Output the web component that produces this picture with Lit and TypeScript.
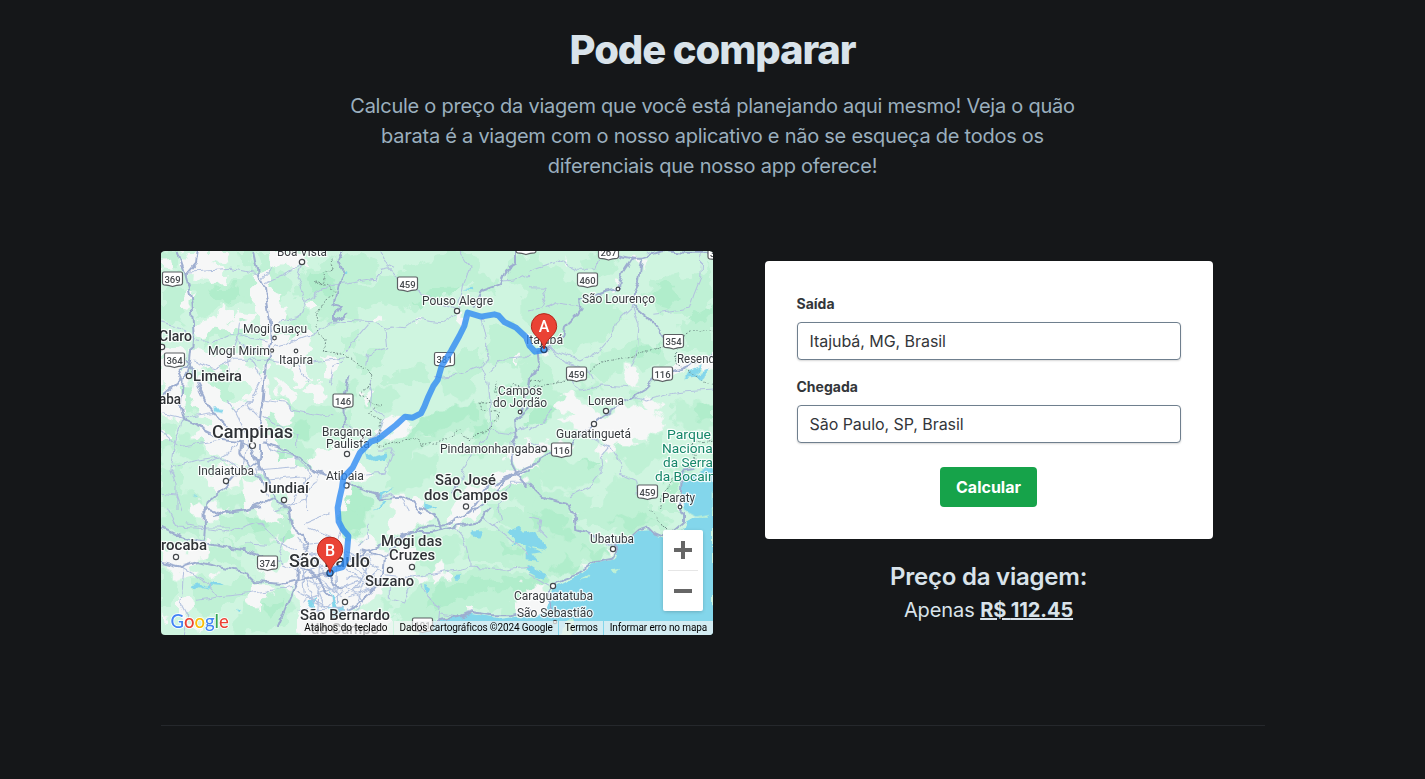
import { LitElement, css, html, svg } from "lit";
import { customElement, property, state } from "lit/decorators.js";

interface Tile {
  x: number;
  y: number;
  dark?: string;
  deep?: string;
  town?: string;
  water?: string;
  minor?: string;
  major?: string;
  border?: string;
}

// The terrain is kept on a grid of three by three tiles, three units to a pixel.
const TILES: Tile[] = [
  {
    x: 0, y: 0,
    dark: "M90 95L130 100 175 85 205 95 280 62 285 150 210 160 170 165 150 190 110 200 95 160ZM285 0L350 0 355 60 385 85 400 130 360 150 380 200 350 210 320 120 300 80ZM430 60L500 20 590 40 590 210 470 215 480 160 440 150 405 130ZM0 120L40 95 80 130 60 220 20 230 0 200ZM380 215L430 170 460 215 440 290 400 300ZM150 220L230 200 290 230 245 265 170 260 110 290 130 240ZM120 310L170 290 210 340 160 375 110 340ZM230 0L270 0 290 60 240 50ZM0 10L45 0 55 50 20 60Z",
    deep: "M440 80L490 50 520 80 500 130 450 130ZM150 110L230 105 250 140 180 155Z",
    town: "M70 0L190 0 195 30 150 45 195 55 190 95 150 100 130 80 75 75 60 30ZM275 75L330 55 325 110 365 125 350 155 375 170 360 205 345 240 320 250 300 205 280 190ZM60 145L90 130 100 180 50 160ZM180 165L225 180 205 215 245 190 290 195 260 215 230 225 215 250 180 230 140 235 120 270 95 250 120 205 165 195ZM375 0L430 20 440 45 410 60 380 45 355 20ZM320 240L380 255 370 290 430 240 450 270 425 330 380 350 330 330 310 290ZM95 290L150 305 190 300 240 310 260 345 210 370 150 350 115 365 90 330ZM0 300L40 290 75 310 80 400 0 400ZM430 150L460 150 450 185ZM480 320L510 310 530 370 490 385ZM0 25L30 20 35 60 0 55ZM240 350L290 345 300 390 220 390ZM330 0L375 0 360 40 335 50ZM390 350L440 340 460 390 400 400Z",
    minor: "M85 60L210 52 250 60 295 70M330 55L300 85M312 95L400 55 420 33 405 80 435 155 410 200 360 210 330 250M435 155L490 110 552 95M95 268L150 275 210 250 235 250 320 270M235 215L230 270 250 285 300 310M340 290L450 250 500 220 552 210M100 330L160 350 220 325 320 325M320 325L400 340 552 320M552 330L515 350 505 400M0 215L60 230 90 265M230 255L200 330 210 390M410 345L440 390",
    major: "M50 0L72 65 90 140 98 250 90 330 70 390M75 70L105 35 110 0M280 0L295 75 312 110 325 200 332 260 310 390M80 340L50 350 60 390M552 190L522 210 522 190 540 165 520 160 535 100 550 70 530 30 545 0",
    border: "M510 25L520 50 485 65 490 90 460 95 500 100 525 125 490 150 470 190 465 230 495 265 490 300 552 312",
  },
  {
    x: 552, y: 0,
    dark: "M-10 105L90 100 150 65 220 40 330 0 380 10 420 70 460 120 370 110 270 140 190 180 90 150 30 185 -10 165ZM0 30L80 0 110 60 70 90 10 80ZM500 30L590 10 590 120 520 90 480 100ZM430 230L500 220 570 270 520 350 420 330ZM40 310L110 290 120 340 50 370ZM150 360L250 340 260 400 120 400ZM340 300L400 290 420 350 360 390 310 350ZM0 250L40 245 30 290 0 300Z",
    deep: "M200 150L280 110 350 110 320 135 260 150 220 170Z",
    town: "M90 192L110 195 112 218 85 215ZM335 190L355 195 350 235 335 220ZM505 320L520 320 515 340ZM205 202L220 198 220 212ZM520 0L552 0 540 15Z",
    water: "M355 115L383 110 385 118ZM0 60L8 65 0 75Z",
    minor: "M105 0L130 45 150 55M0 100L90 85 110 55 130 50M130 50L175 100 225 120 290 160 330 175M0 208L90 212 120 230 140 225 180 230 215 205 290 215 330 190M120 230L125 290 70 310 65 350M75 215L20 280 0 300M345 0L375 45 355 100 340 180M425 215L410 200 425 270 425 320 410 345 428 387M552 70L520 85 475 90M410 345L330 375 270 380M440 360L470 325 540 320 552 310",
    major: "M500 40L480 70 468 100 410 120 385 170M510 0L510 35 485 50",
    border: "M0 310L40 345 78 365 70 412",
  },
  {
    x: 1104, y: 0,
    dark: "M-20 40L90 50 130 100 230 150 290 200 230 260 130 300 60 290 -20 210ZM360 110L430 70 480 85 540 30 552 150 500 190 420 200 350 150ZM160 20L240 0 265 60 220 80 160 60ZM220 300L350 270 400 290 420 330 350 350 290 340 220 390 160 390ZM450 215L552 200 552 300 470 290ZM-20 310L40 320 80 400 -20 400Z",
    deep: "M370 120L420 95 460 130 430 170 385 160ZM320 285L390 280 380 310 310 320ZM470 200L540 160 552 200 500 220Z",
    town: "M100 25L120 35 115 45ZM255 100L275 100 272 120 258 118ZM325 25L345 20 340 45ZM285 345L300 355 340 370 320 400 290 390ZM430 345L490 315 552 320 552 360 480 350 430 375ZM40 290L70 285 65 310 40 310Z",
    water: "M480 360L520 345 500 370 540 355 520 390 500 380 470 385Z",
    minor: "M0 60L90 28 140 55 200 55 215 10M0 110L45 112 50 140 40 170 0 180M50 170L80 155 150 165M375 10L350 0M520 0L515 80 495 130 480 175 370 190M310 165L330 220 325 290 300 350M310 170L260 215 245 260 210 300 150 330 60 290M60 290L110 330 170 350 190 390",
    major: "M260 10L310 20 340 20 400 0 470 5 552 5M310 20L280 65 270 110 225 120 150 150 155 170 140 195 105 230 100 255 60 295 25 302 30 340 0 400M340 20L330 90 315 120 315 165 350 195 375 220 400 255 430 285M370 387L400 370 450 355 552 310",
    border: "M-100 395L-80 430 -50 400 0 410 60 400 100 390 180 365 210 335 310 315 400 285 465 255 500 240 552 240M440 290L440 340 490 370 552 405",
  },
  {
    x: 0, y: 387,
    dark: "M45 0L105 20 135 75 95 105 60 70ZM145 0L210 0 220 50 200 75 160 40ZM310 30L400 80 430 100 480 70 530 90 520 140 410 190 350 195 300 160ZM0 120L50 140 40 210 0 230ZM60 160L120 180 130 230 90 250 40 220ZM350 170L420 190 470 230 450 280 370 250ZM270 250L330 290 310 320 280 290ZM0 250L70 260 60 330 0 350ZM0 340L100 330 130 390 0 390ZM170 350L250 330 300 360 280 390 170 390ZM380 300L430 290 440 320 390 330ZM500 110L570 80 570 180 500 200Z",
    deep: "M405 120L450 130 430 180 390 170ZM310 190L350 210 380 250 340 240Z",
    town: "M20 -20L60 -20 75 70 65 120 0 105 0 60ZM90 -10L170 20 195 80 250 60 270 20 280 -40 320 -30 330 40 370 75 400 120 370 130 320 100 310 160 350 190 350 240 410 230 430 265 460 225 490 200 570 180 590 250 570 330 560 400 400 400 370 330 330 320 310 270 250 265 200 240 140 215 100 165 150 130 110 90 85 50ZM340 -20L370 10 410 40 395 75 360 50ZM180 240L240 260 230 320 160 340 130 290ZM240 300L320 310 345 400 260 390ZM420 20L460 10 500 50 460 60ZM0 150L30 165 20 190 0 185Z",
    water: "M160 82L190 84 182 96 162 92ZM95 340L110 350 105 355Z",
    minor: "M0 100L70 115 160 100M65 120L40 200 30 270 45 310 45 390M0 155L50 200 120 190 180 180M195 60L225 100 265 180M225 100L290 40M305 60L380 70 390 90 440 100 520 110M305 110L340 130 410 165 410 200M300 150L330 210 400 230 450 280 400 350 380 390M30 265L110 240 180 230 250 280M240 180L200 220 140 250M260 180L245 270M270 210L330 330M300 200L290 270 320 350M290 270L400 260M480 280L430 360 340 390M320 300L430 290M270 -60L300 0 260 80 300 120M430 290L440 390M0 340L45 345 60 390",
    major: "M80 -60L105 0 135 65 170 110 205 150M65 0L60 80 70 120 155 160 180 180 230 185M0 55L60 0M310 0L305 60 292 150M230 185L265 200 310 280 350 360 390 400M310 190L350 200 420 240 460 275 500 290 552 300M240 180L235 215 265 265 300 235 300 195M132 400L140 370 185 330 225 285 265 265 345 345M150 405L260 390 345 350M565 -10L550 60 552 150",
  },
  {
    x: 552, y: 387,
    dark: "M240 120L330 90 420 60 430 130 380 150 270 180 200 230 130 260 110 200 180 160 240 170ZM280 -20L380 -20 400 40 330 60 290 50ZM60 30L130 20 170 50 120 90 60 80ZM120 240L280 220 270 290 160 340 120 320 150 270ZM420 130L500 150 480 200 390 240 350 230 400 160ZM450 20L590 10 590 60 470 90ZM-20 0L40 0 30 50 -20 60ZM450 300L520 250 590 290 590 400 470 340Z",
    deep: "M230 110L320 80 390 70 400 110 330 130 250 160 190 180ZM-10 310L30 310 90 370 60 410 0 420 -30 400ZM390 130L440 120 430 160 380 170Z",
    town: "M105 130L150 95 185 120 170 135 200 150 180 165 130 165 105 180 90 160ZM0 240L45 210 50 260 80 280 60 300 0 290ZM430 300L500 270 590 260 530 300 430 330ZM320 390L370 310 420 320 400 390 350 430ZM485 220L580 210 560 260 500 265ZM50 40L80 35 75 75 60 70ZM140 350L190 345 200 360 240 400 140 420Z",
    water: "M60 210L85 230 125 220 120 240 90 245 65 235ZM145 320L110 345 130 365 90 390 120 360 95 345ZM235 370L280 380 235 390Z",
    minor: "M70 0L80 40 75 80 120 110 105 150 70 180M100 210L145 210 120 280 60 285 0 310M428 0L435 60 440 130 420 180 385 220 360 260 340 310M440 150L500 160 552 140M170 355L190 390M110 350L130 340 150 350M460 380L500 310 552 310M0 130L30 150 60 180",
    major: "M0 305L40 325 90 340 105 355 170 350 200 365 230 400M370 400L430 320 500 285 552 260M385 400L480 300 552 270M552 80L510 120 515 170 500 190 500 250 520 290 552 325M345 310L320 340",
    border: "M70 25L40 45 110 75 80 90 70 100 110 120 100 160 100 200 170 180 220 175 230 200 310 175 345 145 370 180 435 145 460 100 410 90 405 70 450 60 460 0",
  },
  {
    x: 1104, y: 387,
    dark: "M-20 0L60 0 70 30 130 40 160 10 230 20 180 50 110 45 70 80 -20 110ZM430 70L500 60 552 90 552 150 470 150 420 100ZM-20 220L80 210 130 240 230 260 200 300 120 330 60 320 -20 280ZM230 180L310 200 400 170 410 230 320 280 270 230ZM250 290L310 300 380 390 220 390ZM20 350L140 330 200 350 180 400 30 400ZM300 20L350 60 370 50 330 80ZM400 340L450 330 455 400 390 400ZM430 260L500 260 450 300Z",
    deep: "M0 90L60 70 100 90 40 120 0 130ZM490 80L552 70 552 120 500 110ZM150 245L210 240 190 270ZM400 290L440 300 430 350Z",
    town: "M70 80L110 35 160 70 180 80 200 110 250 100 300 70 355 90 345 40 400 80 380 100 410 120 400 160 360 180 320 170 310 200 270 190 240 200 210 170 150 150 90 120 130 110ZM-20 180L60 190 130 190 100 220 40 225 -20 260ZM205 195L250 200 240 230 210 225ZM445 350L500 350 455 390ZM290 -40L320 -30 330 10 300 0Z",
    water: "M455 275L480 290 520 270 552 265 552 400 500 410 470 395 455 340Z",
    minor: "M130 0L150 30 220 15 300 20M310 45L355 60 430 40 470 35 552 30M150 150L200 180 240 200 270 240 275 280 320 300 325 340M240 200L215 230 220 270 180 320 120 350M70 80L40 130 0 150M0 185L50 210",
    major: "M0 0L-10 60 -30 100M370 0L340 30 290 60 200 125 130 190 60 225 0 262M0 310L45 355 120 375 130 400M450 380L455 345 460 275 490 270",
    border: "M0 10L40 0M395 390L400 340 430 300 500 250 490 190 552 180",
  },
  {
    x: 0, y: 768,
    dark: "M0 30L60 0 100 30 130 90 50 80 0 70ZM170 30L250 20 300 50 350 20 390 50 400 110 320 110 280 90 180 80ZM120 120L180 120 230 150 270 200 190 180 130 160ZM0 190L50 210 60 260 30 300 0 300ZM90 210L210 230 250 210 310 240 270 260 200 290 160 330 90 300ZM300 260L380 250 400 310 340 375 280 370 220 390 220 320ZM340 0L380 0 390 30ZM180 90L260 110 300 140 240 140Z",
    deep: "M255 35L320 30 330 70 270 80ZM370 60L400 60 400 100 370 100ZM300 300L370 280 340 340Z",
    town: "M80 -10L200 -10 180 30 130 40 90 20ZM280 -20L340 0 360 50 330 40 290 20ZM370 -20L530 -20 540 60 570 110 580 400 420 400 410 300 400 240 350 235 300 200 280 170 350 180 380 170 370 110 330 90 390 100 410 90 390 40ZM0 120L90 130 130 90 150 140 100 170 110 200 60 210 20 190ZM265 235L310 230 330 250 300 290 300 320 270 290ZM60 270L90 290 80 330 120 380 60 340ZM0 320L30 330 20 350ZM150 190L180 195 160 215Z",
    water: "M90 235L120 228 135 240 160 222 187 235 160 232 145 245 120 238 100 247ZM225 300L240 310 232 315ZM450 280L465 270 460 310 445 300ZM510 250L530 300 515 310ZM500 300L545 300 545 330 510 330Z",
    minor: "M20 0L50 60 140 65 200 75 290 45 350 100 410 130M80 50L130 60 210 60M60 180L130 220 170 270 260 260 400 240M70 170L60 290 80 330 70 390M105 280L170 270M250 110L320 115M410 90L460 160 500 190M430 50L500 20M420 180L460 290 545 310M545 50L520 130 420 150 430 260M440 60L530 100 420 110 500 210M400 160L545 270M405 250L500 300 545 250M320 150L410 190 405 230M370 90L350 160M410 310L545 300M440 220L520 250 600 220M450 190L490 300M480 150L470 320M420 200L560 160 600 130M520 120L530 290M430 280L560 230",
    major: "M0 62L60 90 120 105 160 115 250 130 300 150M130 0L132 60 128 105M0 165L60 180 110 165 150 175 250 195 280 225 360 230 410 220 470 205M380 0L390 55 430 90 440 130 410 160 410 220 400 240 350 360M130 0L180 20 250 10 300 0M470 205L505 200 520 235 545 245M420 180L470 210 480 240 510 270",
  },
  {
    x: 552, y: 768,
    dark: "M-20 0L80 0 70 60 20 100 -20 60ZM150 0L220 0 250 60 200 80 150 60ZM390 70L470 60 500 100 590 140 590 180 450 170 370 160 350 110ZM200 90L340 80 350 130 300 180 250 190 200 170ZM210 230L380 180 600 200 600 290 490 320 390 300 290 340 180 345 130 330 190 280ZM430 0L500 0 590 50 590 80 500 80ZM110 270L160 280 140 310 110 310Z",
    deep: "M260 260L340 220 450 210 600 220 600 250 430 250 340 280 250 310ZM460 110L520 120 540 150 470 140ZM-20 20L50 0 70 50 40 90 -20 70Z",
    town: "M150 -20L240 -20 260 40 220 60 180 90 130 70 140 30ZM-20 100L70 90 120 130 200 120 210 170 190 230 120 210 110 260 70 280 30 310 130 330 130 400 -20 400ZM320 20L360 20 350 60 310 60ZM260 190L300 170 310 210 290 235 260 230ZM180 190L250 210 210 230ZM370 290L380 290 385 315 375 315ZM500 290L590 260 610 330 500 320Z",
    water: "M380 70L410 70 400 92 380 85ZM490 75L520 60 540 80 575 70 600 130 520 110 500 115 510 95ZM320 207L350 205 345 218 325 218ZM240 230L262 245 245 260ZM230 350L300 335 370 320 410 325 470 335 552 325 552 420 200 420Z",
    minor: "M0 150L120 145M70 50L70 90 40 120M0 180L60 230 100 180M0 210L100 220 0 260M10 160L70 180 20 260M30 140L90 230M0 130L60 160 120 200M80 150L40 280M120 200L200 210 270 200 330 190 375 180M330 60L360 100 375 160 375 180 440 185 480 190 552 180M230 230L260 290 285 300 280 350M130 230L130 270 180 285 195 250 210 230M410 30L450 60 510 110 552 145M460 0L470 40 440 55M285 320L340 330 380 310M0 240L60 280 20 320M-20 120L50 200 40 250M10 270L100 240",
    major: "M0 165L110 115 190 80 240 60 300 55 365 20 400 0M120 145L190 75 260 75 330 60 400 45 440 0M225 0L270 25 290 70M120 150L115 200 80 255 30 295 0 310M50 130L120 150M280 340L340 330 380 315 440 325 500 325 552 310",
  },
  {
    x: 1104, y: 768,
    dark: "M-20 0L120 0 145 60 200 90 220 120 240 150 180 170 100 210 60 215 -20 170ZM160 0L380 0 430 60 400 80 350 60 300 90 250 70 200 70 150 40ZM470 0L552 0 552 40 490 40Z",
    deep: "M0 20L80 10 120 60 140 100 80 90 20 60ZM170 130L230 120 240 145 200 160ZM250 40L330 20 370 40 300 70ZM60 190L110 150 160 180 100 205Z",
    town: "M-20 240L50 235 65 290 50 330 -20 330ZM160 175L180 180 165 200ZM230 130L260 130 255 155Z",
    water: "M-10 115L40 135 10 140 30 165 -10 160ZM-10 170L55 210 40 215 -10 190Z",
    minor: "M0 30L35 40 30 70 55 95M0 200L60 235M215 85L235 120 290 100",
    major: "M120 0L140 30 145 70 180 80 210 100M70 238L60 250 62 290 80 330M70 235L110 212 150 198 200 162 250 152 265 130 260 110 300 95 330 68 355 60 370 75 400 88 430 75 465 45 465 20 450 0",
    border: "M360 10L375 25 385 45 415 65 420 85",
  },
];

const SEA =
  "M1104 1104L1150 1085 1168 1030 1180 1008 1225 985 1262 968 1308 932 1365 922 1371 900 1366 880 1400 870 1435 840 1470 838 1505 865 1560 850 1575 815 1600 800 1640 800 1656 775 1656 1160 1104 1160Z";
const COAST =
  "M1208 1115L1238 1100 1246 1130 1225 1160 1200 1160ZM1270 980L1285 970 1280 983 1252 988ZM1355 958L1378 953 1362 968Z";
const ROUTE =
  "M505 968L520 955 545 948 556 925 562 855 545 835 533 812 530 770 536 740 543 710 547 680 575 650 597 605 630 572 650 565 667 552 705 522 732 497 755 500 780 487 790 467 802 437 817 405 830 387 842 345 870 300 895 255 910 225 920 185 960 197 1000 190 1013 194 1030 213 1065 230 1095 258 1106 285 1122 302 1149 297";

type Label = [text: string, x: number, end: number, baseline: number, size: number, kind?: string];

const LABELS: Label[] = [
  ["Boa Vista", 116, 166, 5, 12],
  ["Claro", -2, 31, 89.5, 14, "city"],
  ["Mogi Guaçu", 82, 146, 82, 12],
  ["Mogi Mirim", 47, 109, 104, 12],
  ["Itapira", 118, 152, 113, 12],
  ["Limeira", 32, 81, 130, 14, "city"],
  ["aba", -2, 20, 153, 14, "city"],
  ["Campinas", 51, 132, 187, 17.5, "city"],
  ["Indaiatuba", 37, 93, 224, 12],
  ["Jundiaí", 99, 148, 242, 14, "city"],
  ["Bragança", 161, 211, 185, 12],
  ["Paulista", 165, 209, 197, 12],
  ["Atibaia", 165, 203, 229, 12],
  ["rocaba", 0, 46, 299, 14, "city"],
  ["São Paulo", 128, 209, 315.5, 18, "city"],
  ["São Bernardo", 139, 229, 368.5, 14.5, "city"],
  ["do Campo", 150, 218, 383, 14.5, "city"],
  ["Suzano", 204, 253, 335, 14, "city"],
  ["Mogi das", 220, 281, 294.5, 14, "city"],
  ["Cruzes", 228, 274, 309, 14, "city"],
  ["São José", 274, 335, 234, 14, "city"],
  ["dos Campos", 263, 347, 249, 14, "city"],
  ["Pouso Alegre", 261, 332, 54, 12],
  ["São Lourenço", 421, 494, 51.5, 12],
  ["Itajubá", 365, 402, 93, 12],
  ["Resende", 516, 560, 112, 12],
  ["Campos", 337, 381, 144, 12],
  ["do Jordão", 332, 386, 156, 12],
  ["Lorena", 427, 463, 154, 12],
  ["Guaratinguetá", 395, 470, 187, 12],
  ["Pindamonhangaba", 279, 380, 202, 12],
  ["Parque", 506, 550, 188, 13, "park"],
  ["Nacional", 501, 555, 202, 13, "park"],
  ["da Serra", 502, 552, 216, 13, "park"],
  ["da Bocaina", 494, 562, 230, 13, "park"],
  ["Paraty", 501, 534, 251, 12],
  ["Ubatuba", 429, 473, 292, 12],
  ["Caraguatatuba", 353, 432, 349, 12],
  ["São Sebastião", 356, 432, 366, 12],
];

const DOTS: [number, number, number][] = [
  [141, 11, 2.7], [113.5, 87, 1.8], [111, 99.5, 1.6], [135, 100, 1.8], [28, 125, 2.7], [1, 96, 2.7],
  [91.5, 194.5, 3], [65, 230, 2.6], [123, 249, 2.6], [186, 203, 2.6], [185.5, 234.5, 2.6], [15, 306, 2.6],
  [229, 319, 2.6], [251, 316, 2.6], [305, 255.5, 2.6], [296, 60, 2.6], [457, 38, 1.8], [359, 161, 1.8],
  [445, 160, 2.6], [433, 173, 2.6], [383, 198, 2.6], [519, 256, 1.8], [452, 298, 2.6], [392, 335, 2.6],
  [184, 351, 2.6], [394, 371, 1.6],
];

const SHIELDS: [string, number, number][] = [
  ["369", 11.5, 28], ["459", 246.5, 33], ["460", 426.5, 29], ["267", 447.5, 1.5], ["364", 13.5, 109],
  ["381", 283.5, 108.5], ["354", 512.5, 90.5], ["459", 415.5, 123], ["116", 501.5, 123], ["146", 182, 150],
  ["116", 400.5, 199], ["459", 486.5, 241], ["374", 106.5, 312], ["101", 261.5, 374], ["354", 557, 2], ["381", 365, -4],
];

@customElement("route-map")
export class RouteMap extends LitElement {
  static styles = css`
    :host {
      display: block;
      position: relative;
      width: 552px;
      height: 384px;
      overflow: hidden;
      border-radius: 4px;
      font-family: Roboto, "Liberation Sans", sans-serif;
    }
    .terrain { display: block; width: 552px; height: 384px; }
    .pale { fill: #cff5e0; }
    .dark { fill: #bff1d5; }
    .deep { fill: #b0edcb; }
    .town { fill: #f6f7f7; }
    .water { fill: #83d6eb; }
    .minor { fill: none; stroke: #b3c2df; stroke-width: 3.2; stroke-linejoin: round; }
    .major { fill: none; stroke: #9eaed0; stroke-width: 6; stroke-linejoin: round; }
    .border { fill: none; stroke: #6f8b86; stroke-width: 3; stroke-dasharray: 5 5; }
    .route { fill: none; stroke: #2f8bf2; stroke-width: 18; stroke-linejoin: round; stroke-linecap: round; opacity: 0.8; }
    .label { fill: #383c40; stroke: #fff; stroke-width: 2.4; stroke-opacity: 0.85; stroke-linejoin: round; paint-order: stroke; }
    .city { fill: #303337; font-weight: 500; }
    .park { fill: #16876a; }
    .dot { fill: #fff; stroke: #43474b; stroke-width: 1.2; }
    .shield { fill: #fff; stroke: #5b5f63; stroke-width: 1.2; }
    .shield-number { fill: #45494d; font-size: 9.5px; font-weight: 500; text-anchor: middle; }
    .pin { fill: #ea4335; stroke: #b3261b; stroke-width: 1; }
    .pin-letter { fill: #fff; font-size: 16px; font-weight: 500; text-anchor: middle; }
    .stop { fill: #4b9df5; stroke: #26466e; stroke-width: 1.3; }
    .logo { font-family: Lato, Roboto, sans-serif; font-size: 18.5px; font-weight: 500; stroke: #fff; stroke-width: 1.6; paint-order: stroke; }
    .blue { fill: #4285f4; }
    .red { fill: #ea4335; }
    .yellow { fill: #fbbc04; }
    .green { fill: #34a853; }
    .zoom {
      position: absolute;
      right: 10px;
      bottom: 24px;
      width: 40px;
      height: 81px;
      background: #fff;
      border-radius: 2px;
      box-shadow: 0 1px 4px -1px rgba(0, 0, 0, 0.3);
      display: flex;
      flex-direction: column;
      align-items: center;
    }
    .zoom-button { flex: 1; width: 40px; padding: 0; border: 0; background: none; display: grid; place-items: center; }
    .zoom-icon { display: block; fill: #666; }
    .zoom-rule { width: 30px; height: 1px; background: #e6e6e6; }
    .legal {
      position: absolute;
      right: 0;
      bottom: 0;
      height: 14px;
      display: flex;
      font-size: 10px;
      line-height: 14px;
      letter-spacing: -0.13px;
      color: #000;
      white-space: nowrap;
    }
    .legal-item { padding: 0 5.5px 0 5.5px; background: rgba(245, 245, 245, 0.7); }
    .legal-item:first-child { padding-left: 3px; letter-spacing: 0; }
    .legal-item + .legal-item { margin-left: 1px; }
  `;

  private layer(kind: "dark" | "deep" | "town" | "water" | "minor" | "major" | "border") {
    return TILES.map((t) =>
      t[kind] ? svg`<path class=${kind} transform="translate(${t.x} ${t.y})" d=${t[kind]}></path>` : null
    );
  }

  private pin(letter: string, x: number, y: number) {
    return svg`<g transform="translate(${x} ${y})">
      <circle class="stop" r="3"></circle>
      <path class="pin" d="M0-.5C-1.2-6.500-4-9.500-7.500-13.200C-10.600-16.200-12.700-19.200-12.700-23.200A12.700 12.700 0 0 1 12.700-23.200C12.700-19.200 10.600-16.200 7.500-13.200C4-9.500 1.200-6.500 0-.5Z"></path>
      <text class="pin-letter" y="-17.500">${letter}</text>
    </g>`;
  }

  render() {
    return html`
      <svg class="terrain" viewBox="0 0 552 384" role="img" aria-label="Mapa da rota">
        <defs>
          <filter id="rough" x="-30" y="-30" width="1716" height="1212" filterUnits="userSpaceOnUse" color-interpolation-filters="sRGB">
            <feTurbulence type="fractalNoise" baseFrequency="0.028" numOctaves="2" seed="4" result="n"></feTurbulence>
            <feDisplacementMap in="SourceGraphic" in2="n" scale="62" xChannelSelector="R" yChannelSelector="G"></feDisplacementMap>
          </filter>
          <filter id="bend" x="-30" y="-30" width="1716" height="1212" filterUnits="userSpaceOnUse" color-interpolation-filters="sRGB">
            <feTurbulence type="fractalNoise" baseFrequency="0.03" numOctaves="2" seed="9" result="n"></feTurbulence>
            <feDisplacementMap in="SourceGraphic" in2="n" scale="24" xChannelSelector="R" yChannelSelector="G"></feDisplacementMap>
          </filter>
        </defs>
        <rect class="pale" width="552" height="384"></rect>
        <g transform="scale(.33333)">
          <g filter="url(#rough)">
            ${this.layer("dark")}${this.layer("deep")}${this.layer("town")}
          </g>
          <g filter="url(#bend)">
            ${this.layer("water")}
            <path class="water" d=${SEA}></path>
            <path class="water" d="M1630 1060H1700V1200H1060V1130H1630Z"></path>
            <path class="dark" d=${COAST}></path>
            ${this.layer("minor")}${this.layer("border")}${this.layer("major")}
          </g>
        </g>
        ${SHIELDS.map(
          ([n, x, y]) => svg`<g transform="translate(${x} ${y})">
            <path class="shield" d="M-10-5.500Q-10-7-8.500-7H8.500Q10-7 10-5.500V4Q10 5.500 8.500 5.800Q4 6 0 7.500Q-4 6-8.500 5.800Q-10 5.500-10 4Z"></path>
            <text class="shield-number" y="3.500">${n}</text>
          </g>`
        )}
        ${DOTS.map(([x, y, r]) => svg`<circle class="dot" cx=${x} cy=${y} r=${r}></circle>`)}
        ${LABELS.map(
          ([t, x, end, y, size, kind = ""]) =>
            svg`<text class="label ${kind}" x=${x} y=${y} font-size=${size} textLength=${end - x} lengthAdjust="spacingAndGlyphs">${t}</text>`
        )}
        <g transform="scale(.33333)"><path class="route" d=${ROUTE}></path></g>
        ${this.pin("A", 383, 98.5)}${this.pin("B", 169, 322)}
        <text class="logo" x="9.500" y="376.500"><tspan class="blue">G</tspan><tspan class="red">o</tspan><tspan class="yellow">o</tspan><tspan class="blue">g</tspan><tspan class="green">l</tspan><tspan class="red">e</tspan></text>
      </svg>
      <div class="zoom">
        <button class="zoom-button" aria-label="Aumentar o zoom">
          <svg class="zoom-icon" width="18" height="18" viewBox="0 0 18 18"><path d="M7 0h4v7h7v4h-7v7H7v-7H0V7h7z"></path></svg>
        </button>
        <div class="zoom-rule"></div>
        <button class="zoom-button" aria-label="Diminuir o zoom">
          <svg class="zoom-icon" width="18" height="18" viewBox="0 0 18 18"><path d="M0 7h18v4H0z"></path></svg>
        </button>
      </div>
      <div class="legal">
        <span class="legal-item">Atalhos do teclado</span>
        <span class="legal-item">Dados cartográficos ©2024 Google</span>
        <span class="legal-item">Termos</span>
        <span class="legal-item">Informar erro no mapa</span>
      </div>
    `;
  }
}

@customElement("place-field")
export class PlaceField extends LitElement {
  @property() label = "";
  @property() value = "";

  static styles = css`
    :host { display: block; }
    .label { display: block; margin-bottom: 8px; font-size: 14px; line-height: 21px; font-weight: 700; color: #33363a; }
    .input {
      display: block;
      box-sizing: border-box;
      width: 100%;
      height: 38px;
      padding: 0 12px;
      border: 1px solid #6f7f8e;
      border-radius: 4px;
      background: #fff;
      box-shadow: 0 1px 2px rgba(0, 0, 0, 0.16);
      color: #33363a;
      font: 400 16px/24px Inter, sans-serif;
      letter-spacing: -0.05px;
      outline: none;
    }
  `;

  render() {
    return html`<label class="label" for="place">${this.label}</label>
      <input class="input" id="place" type="text" .value=${this.value} />`;
  }
}

@customElement("app-root")
export class AppRoot extends LitElement {
  @state() private price = "112.45";

  static styles = css`
    :host {
      display: block;
      box-sizing: border-box;
      height: 779px;
      overflow: hidden;
      background: #151719;
      color: #d9e3ea;
      font-family: Inter, "Liberation Sans", sans-serif;
    }
    .container { width: 1104px; margin: 0 auto; height: 725px; border-bottom: 1px solid #25282c; }
    .intro { width: 768px; margin: 0 auto; padding-top: 25px; text-align: center; }
    .title { margin: 0 0 16px; font-size: 40px; line-height: 50px; font-weight: 800; letter-spacing: -1.1px; }
    .lead { margin: 0; padding: 0 10px; font-size: 20px; line-height: 30px; letter-spacing: -0.25px; color: #9bafbe; }
    .compare { display: grid; grid-template-columns: 552px 552px; align-items: center; margin-top: 70px; }
    .quote { display: flex; flex-direction: column; align-items: center; }
    .card {
      box-sizing: border-box;
      width: 448px;
      padding: 32px;
      border-radius: 4px;
      background: #fff;
      display: flex;
      flex-direction: column;
      gap: 16px;
    }
    .submit {
      align-self: center;
      margin-top: 8px;
      height: 40px;
      padding: 0 16px;
      border: 0;
      border-radius: 4px;
      background: #16a34a;
      color: #fff;
      font: 700 16px/24px Inter, sans-serif;
    }
    .result-title { margin: 22px 0 0; font-size: 24px; line-height: 32px; font-weight: 600; letter-spacing: -0.22px; }
    .result { margin: 1px 0 -1px; font-size: 20px; line-height: 32px; letter-spacing: -0.1px; }
    .price { font-weight: 700; text-decoration: underline; }
  `;

  render() {
    return html`
      <section class="container">
        <header class="intro">
          <h2 class="title">Pode comparar</h2>
          <p class="lead">
            Calcule o preço da viagem que você está planejando aqui mesmo! Veja o quão barata é a viagem com o
            nosso aplicativo e não se esqueça de todos os diferenciais que nosso app oferece!
          </p>
        </header>
        <div class="compare">
          <route-map></route-map>
          <div class="quote">
            <form class="card" @submit=${(e: Event) => e.preventDefault()}>
              <place-field label="Saída" value="Itajubá, MG, Brasil"></place-field>
              <place-field label="Chegada" value="São Paulo, SP, Brasil"></place-field>
              <button class="submit">Calcular</button>
            </form>
            <h4 class="result-title">Preço da viagem:</h4>
            <p class="result">Apenas <span class="price">R$ ${this.price}</span></p>
          </div>
        </div>
      </section>
    `;
  }
}
